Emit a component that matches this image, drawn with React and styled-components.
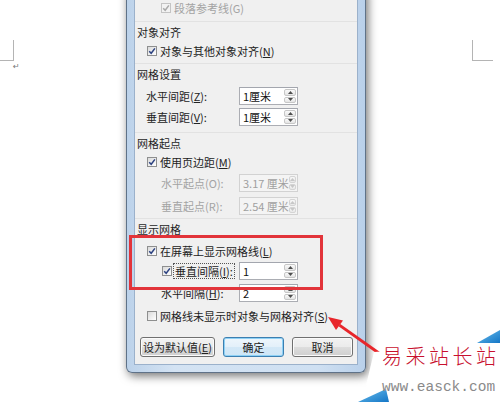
import React from 'react'
import styled, { createGlobalStyle, css } from 'styled-components'

const Global = createGlobalStyle`
  html, body { margin: 0; padding: 0; background: #fff; }
  body { overflow: hidden; }
`

function Check({ checked = true, disabled }) {
  return (
    <Box $disabled={disabled}>
      {checked && (
        <svg width="8" height="8" viewBox="0 0 8 8">
          <path d="M1.2 4.2 L3.2 6.3 L6.9 1.4" fill="none"
            stroke={disabled ? '#a9a9a9' : '#2c4281'} strokeWidth="1.5" />
        </svg>
      )}
    </Box>
  )
}

function Spin({ disabled }) {
  return (
    <Spinner $disabled={disabled}>
      <SpinBtn>
        <svg width="5" height="3" viewBox="0 0 5 3"><path d="M0 3 L2.5 0 L5 3Z" fill={disabled ? '#b5b5b5' : '#4d4d4d'} /></svg>
      </SpinBtn>
      <SpinBtn>
        <svg width="5" height="3" viewBox="0 0 5 3"><path d="M0 0 L2.5 3 L5 0Z" fill={disabled ? '#b5b5b5' : '#4d4d4d'} /></svg>
      </SpinBtn>
    </Spinner>
  )
}

function Field({ label, value, indent = 11, disabled, mt }) {
  return (
    <Row $mt={mt}>
      <Label $indent={indent} $disabled={disabled}>{label}</Label>
      <Input $disabled={disabled}>
        <span>{value}</span>
        <Spin disabled={disabled} />
      </Input>
    </Row>
  )
}

export default function App() {
  return (
    <Page>
      <Global />
      <CornerLeft />
      <ReturnMark>↵</ReturnMark>
      <CornerRight />

      <Dialog>
        <Panel>
          <Row $indent={26} $mt={-1}>
            <Check disabled />
            <Text $disabled>段落参考线(G)</Text>
          </Row>

          <Heading $mt={3}>对象对齐</Heading>
          <Row $indent={12}>
            <Check />
            <Text>对象与其他对象对齐(<u>N</u>)</Text>
          </Row>

          <Heading $mt={2}>网格设置</Heading>
          <Field mt={3} label={<>水平间距(<u>Z</u>):</>} value="1厘米" />
          <Field mt={1} label={<>垂直间距(<u>V</u>):</>} value="1厘米" />

          <Heading $mt={5}>网格起点</Heading>
          <Row $indent={12}>
            <Check />
            <Text>使用页边距(<u>M</u>)</Text>
          </Row>
          <Field mt={1} indent={26} disabled label="水平起点(O):" value="3.17 厘米" />
          <Field mt={3} indent={26} disabled label="垂直起点(R):" value="2.54 厘米" />

          <Heading $mt={2}>显示网格</Heading>
          <Row $indent={12} $mt={3}>
            <Check />
            <Text>在屏幕上显示网格线(<u>L</u>)</Text>
          </Row>
          <Row>
            <NestedLabel>
              <Check />
              <Focus>垂直间隔(<u>I</u>):</Focus>
            </NestedLabel>
            <Input>
              <span>1</span>
              <Spin />
            </Input>
          </Row>
          <Field mt={2} indent={26} label={<>水平间隔(<u>H</u>):</>} value="2" />
          <Row $indent={12} $mt={3}>
            <Check checked={false} />
            <Text>网格线未显示时对象与网格对齐(<u>S</u>)</Text>
          </Row>

          <Buttons>
            <Button $w={75}>设为默认值(<u>E</u>)</Button>
            <Button $w={61} $primary>确定</Button>
            <Button $w={61}>取消</Button>
          </Buttons>
        </Panel>
      </Dialog>

      <Highlight />

      <Arrow width="70" height="50" viewBox="325 312 70 50">
        <line x1="383" y1="356" x2="339.4" y2="325.1" stroke="#e8262b" strokeWidth="3" />
        <polygon points="328,317 343,320.5 336,330" fill="#e8262b" />
      </Arrow>

      <Watermark>
        <WatermarkShape width="145" height="75" viewBox="355 327 145 75">
          <polygon points="374,352 500,343 500,402 362,402" fill="#fff" />
          <defs>
            <linearGradient id="wb" x1="0" y1="0" x2="1" y2="1">
              <stop offset="0" stopColor="#6cc0ee" />
              <stop offset="1" stopColor="#1476c6" />
            </linearGradient>
          </defs>
          <polygon points="477,343 500,330 500,343" fill="url(#wb)" />
          <polygon points="358,402 386,389 389,402" fill="url(#wb)" />
        </WatermarkShape>
        <Brand>易采站长站</Brand>
        <Url>www.easck.com</Url>
      </Watermark>
    </Page>
  )
}

const Page = styled.div`
  position: relative;
  width: 500px;
  height: 402px;
  overflow: hidden;
  background: #fff;
  font-family: "Noto Sans CJK SC", "Microsoft YaHei", sans-serif;
`

const Corner = styled.div`
  position: absolute;
  top: 40px;
  width: 13px;
  height: 20px;
  border-bottom: 1px solid #b4b4b4;
`
const CornerLeft = styled(Corner)`
  left: 0;
  border-right: 1px solid #b4b4b4;
`
const CornerRight = styled(Corner)`
  left: 472px;
  width: 20px;
  border-left: 1px solid #b4b4b4;
`
const ReturnMark = styled.div`
  position: absolute;
  left: 13px;
  top: 62px;
  font-family: "DejaVu Sans", sans-serif;
  font-size: 8px;
  color: #777;
`

const Dialog = styled.div`
  position: absolute;
  left: 126px;
  top: -12px;
  width: 240px;
  box-sizing: border-box;
  padding: 0 7px 7px;
  background: linear-gradient(to right, #bcd2ea, #d4e3f3 20%, #cfe0f2 80%, #b9d0ea);
  border: 1px solid #5f7288;
  border-top: none;
  border-radius: 0 0 6px 6px;
  box-shadow: 2px 3px 10px rgba(0, 0, 0, 0.55);
`

const Panel = styled.div`
  background: #f0f0f0;
  border: 1px solid #9bb1cb;
  padding: 10px 0 7px;
  display: flex;
  flex-direction: column;
  font-size: 11px;
  color: #222;
`

const Row = styled.div`
  height: 20px;
  display: flex;
  align-items: center;
  padding-left: ${p => p.$indent || 0}px;
  margin-top: ${p => p.$mt || 0}px;
  white-space: nowrap;
`

const Heading = styled.div`
  height: 20px;
  line-height: 20px;
  padding-left: 2px;
  margin-top: ${p => p.$mt || 0}px;
  border-top: 1px solid #e2e2e2;
  box-sizing: border-box;
  color: #1f1f1f;
`

const Box = styled.span`
  width: 10px;
  height: 10px;
  box-sizing: border-box;
  flex: none;
  display: inline-flex;
  align-items: center;
  justify-content: center;
  border: 1px solid ${p => (p.$disabled ? '#c4c4c4' : '#8e8f8f')};
  background: ${p => (p.$disabled ? '#f2f2f2' : 'linear-gradient(135deg, #dadada, #ffffff)')};
`

const Text = styled.span`
  margin-left: 3px;
  color: ${p => (p.$disabled ? '#a3a3a3' : '#222')};
`

const Label = styled.span`
  width: 104px;
  box-sizing: border-box;
  padding-left: ${p => p.$indent}px;
  color: ${p => (p.$disabled ? '#a3a3a3' : '#222')};
`

const NestedLabel = styled.span`
  width: 104px;
  box-sizing: border-box;
  padding-left: 27px;
  display: flex;
  align-items: center;
`

const Focus = styled.span`
  margin-left: 2px;
  padding: 0 1px;
  line-height: 14px;
  outline: 1px dotted #555;
`

const Input = styled.div`
  width: 59px;
  height: 18px;
  box-sizing: border-box;
  display: flex;
  align-items: center;
  justify-content: space-between;
  padding: 0 1px 0 3px;
  background: ${p => (p.$disabled ? '#f4f4f4' : '#fff')};
  border: 1px solid ${p => (p.$disabled ? '#d2d2d2' : '#abadb3')};
  border-top-color: ${p => (p.$disabled ? '#d2d2d2' : '#a3a6ae')};
  color: ${p => (p.$disabled ? '#a0a0a0' : '#111')};
`

const Spinner = styled.div`
  width: 12px;
  height: 14px;
  display: flex;
  flex-direction: column;
  gap: 1px;
  ${p => p.$disabled && css`opacity: 0.7;`}
`

const SpinBtn = styled.span`
  flex: 1;
  display: flex;
  align-items: center;
  justify-content: center;
  border: 1px solid #c7c7c7;
  border-radius: 2px;
  background: linear-gradient(#fafafa, #e4e4e4);
`

const Buttons = styled.div`
  display: flex;
  gap: 8px;
  padding-left: 5px;
  margin-top: 11px;
`

const Button = styled.div`
  width: ${p => p.$w}px;
  height: 20px;
  box-sizing: border-box;
  display: flex;
  align-items: center;
  justify-content: center;
  border-radius: 3px;
  border: 1px solid ${p => (p.$primary ? '#3c7fb1' : '#707070')};
  background: ${p => (p.$primary
    ? 'linear-gradient(#eef6fc, #e3f0fa 50%, #d3e8f7 51%, #cfe6f6)'
    : 'linear-gradient(#f2f2f2, #ebebeb 50%, #dddddd 51%, #cfcfcf)')};
  box-shadow: inset 0 0 0 1px ${p => (p.$primary ? '#8ed1f5' : '#fbfbfb')};
  color: #222;
  white-space: nowrap;
`

const Highlight = styled.div`
  position: absolute;
  left: 129px;
  top: 235px;
  width: 194px;
  height: 55px;
  box-sizing: border-box;
  border: 3px solid #e2343a;
`

const Arrow = styled.svg`
  position: absolute;
  left: 325px;
  top: 312px;
`

const Watermark = styled.div`
  position: absolute;
  left: 355px;
  top: 327px;
  width: 145px;
  height: 75px;
  display: flex;
  flex-direction: column;
  padding: 17px 0 0 27px;
  box-sizing: border-box;
`

const WatermarkShape = styled.svg`
  position: absolute;
  left: 0;
  top: 0;
`

const Brand = styled.div`
  position: relative;
  font-size: 20px;
  line-height: 24px;
  letter-spacing: 3.5px;
  color: #c8102e;
  font-weight: 300;
`

const Url = styled.div`
  position: relative;
  margin-top: 12px;
  font-family: "Liberation Mono", monospace;
  font-size: 14.5px;
  line-height: 14px;
  color: #8a8a8a;
`
